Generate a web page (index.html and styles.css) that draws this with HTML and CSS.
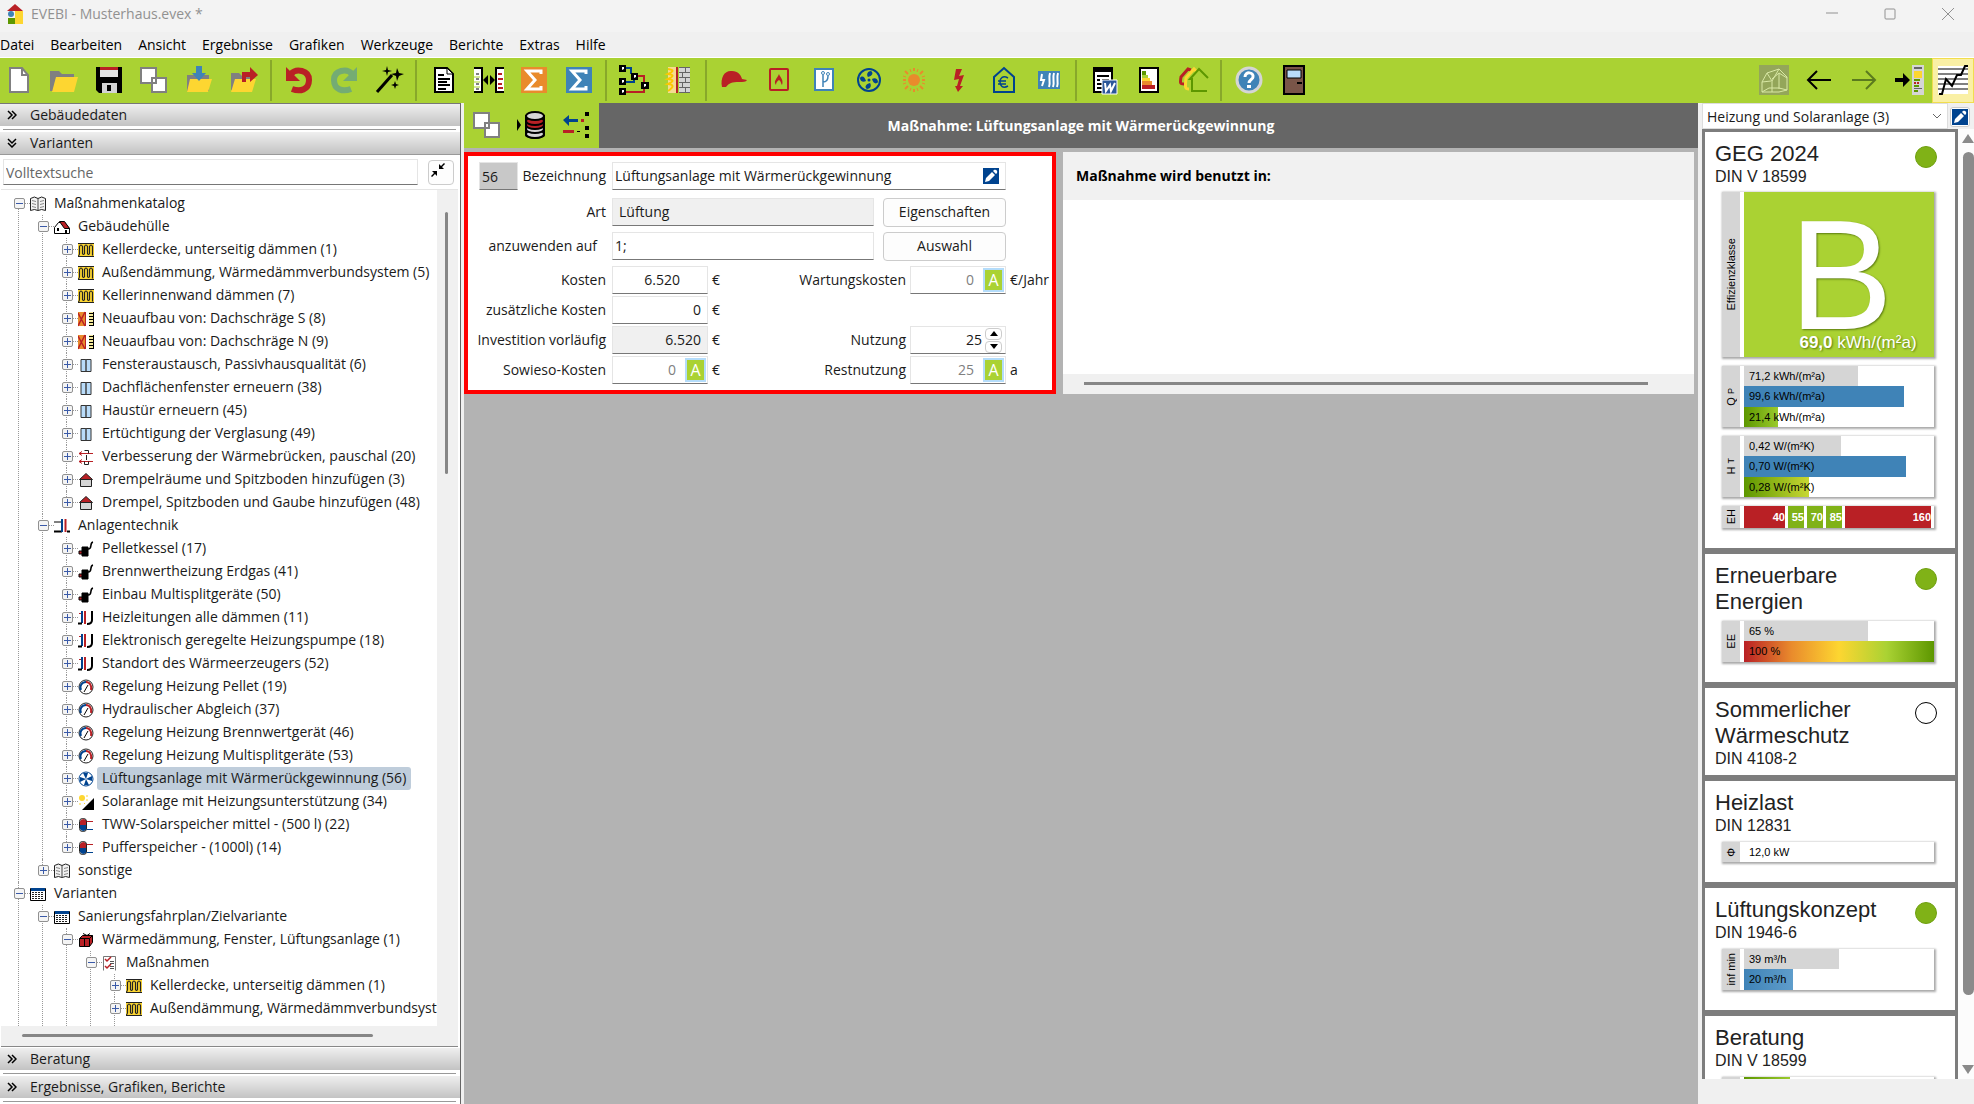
FILE: index.html
```html
<!DOCTYPE html>
<html lang="de">
<head>
<meta charset="utf-8">
<title>EVEBI - Musterhaus.evex *</title>
<link rel="stylesheet" href="styles.css">
</head>
<body>
<svg class="sprite" aria-hidden="true">
  <!-- toolbar icons, 30 x 30 -->
  <symbol id="new" viewBox="0 0 30 30"><path d="M6 3h12l6 7v17H6z" fill="#fff" stroke="#808080" stroke-width="2"/><path d="M18 3v7h6" fill="none" stroke="#808080" stroke-width="2"/></symbol>
  <symbol id="open" viewBox="0 0 30 30"><path d="M1 6h9l3 3h12v6H1z" fill="#808080"/><path d="M1 9h24v17H1z" fill="#808080"/><path d="M7 12h22l-4 15H3z" fill="#fdd631"/></symbol>
  <symbol id="save" viewBox="0 0 30 30"><path d="M2 2h26v26H5l-3-3z" fill="#000"/><path d="M6 3h18v9H6z" fill="#e4e4e4"/><path d="M6 2h18v3H6z" fill="#b92025"/><path d="M8 18h15v10H8z" fill="#d4d4d4"/><path d="M13 20h4v6h-4z" fill="#000"/></symbol>
  <symbol id="copy" viewBox="0 0 30 30"><path d="M2 3h15v15H2zM13 13h14v14H13z" fill="#fff" stroke="#808080" stroke-width="2"/></symbol>
  <symbol id="import" viewBox="0 0 30 30"><path d="M3 10h22v16H3z" fill="#808080"/><path d="M6 14h22l-4 13H3z" fill="#fdd631"/><path d="M12 1h6v7h4l-7 8-7-8h4z" fill="#3f83b7"/></symbol>
  <symbol id="export" viewBox="0 0 30 30"><path d="M2 8h8l3 3h10v14H2z" fill="#808080"/><path d="M6 14h21l-4 13H2z" fill="#fdd631"/><path d="M13 17V7h8V2l8 8-8 7v-5h-4v5z" fill="#b92025"/></symbol>
  <symbol id="undo" viewBox="0 0 30 30"><path d="M7 9c5-6 18-4 18 6 0 10-9 12-17 9" fill="none" stroke="#b92025" stroke-width="6"/><path d="M2 2v14h14z" fill="#b92025"/></symbol>
  <symbol id="redo" viewBox="0 0 30 30"><path d="M23 9C18 3 5 5 5 15c0 10 9 12 17 9" fill="none" stroke="#74ac73" stroke-width="6"/><path d="M28 2v14H14z" fill="#74ac73"/></symbol>
  <symbol id="wand" viewBox="0 0 30 30"><path d="M3 27L18 10" stroke="#000" stroke-width="3"/><path d="M13 1l1 4 4 1-4 1-1 4-1-4-4-1 4-1zM23 3l2 5 5 1-5 2-2 5-1-5-5-2 5-1zM21 16l1 3 3 1-3 1-1 3-1-3-3-1 3-1z" fill="#000"/></symbol>
  <symbol id="doc" viewBox="0 0 30 30"><path d="M6 3h12l6 6v18H6z" fill="#fff" stroke="#000" stroke-width="2"/><path d="M18 3v6h6z" fill="#fff" stroke="#000"/><path d="M9 10h6M9 14h12M9 17h9M9 20h12M9 24h8" stroke="#000" stroke-width="2"/></symbol>
  <symbol id="compare" viewBox="0 0 30 30"><path d="M0 2h8v26H0z" fill="#fff"/><path d="M22 2h8v26h-8z" fill="#fff"/><path d="M0 3h8v24H0M30 3h-8v24h8" fill="none" stroke="#000" stroke-width="2"/><path d="M2 9h3M2 14h3M2 19h3M2 24h3" stroke="#000"/><path d="M0 12h6M0 17h6M0 22h6" stroke="#aad233"/><path d="M24 9h4M24 14h5M24 19h4M24 23h5" stroke="#b92025" stroke-width="2"/><path d="M14 10v10l-5-5zM16 10v10l5-5z" fill="#000"/></symbol>
  <symbol id="sum" viewBox="0 0 30 30"><path d="M2 2h26v26H2z"/><path d="M22 9V6H8l8 9-8 9h14v-3" fill="none" stroke="#fff" stroke-width="3"/></symbol>
  <symbol id="nodes" viewBox="0 0 30 30"><path d="M5 3h7v6M5 17h10v-4" fill="none" stroke="#00438f" stroke-width="2"/><path d="M5 27h20v-6M18 11h7v7" fill="none" stroke="#b92025" stroke-width="2"/><path d="M0 0h7v7H0zM0 13h7v7H0zM0 23h7v7H0zM12 8h7v7h-7zM22 17h8v7h-8z"/><path d="M3 2h2v2l-2 1zM3 15h2v2l-2 1zM3 25h2v2l-2 1zM15 10h2v2l-2 1zM25 19h2v2l-2 1z" fill="#fff"/></symbol>
  <symbol id="wall" viewBox="0 0 30 30"><path d="M4 2h9v26H4z" fill="#f5dc90"/><path d="M4 4q9 1 0 5q9 1 0 5q9 1 0 5q9 1 0 7" fill="none" stroke="#fdc800" stroke-width="2"/><path d="M12 2h2v26h-2z" fill="#b92025"/><path d="M15 2h11v26H15z" fill="#666"/><path d="M15 3h6v4h-6zM22 3h4v4h-4zM15 8h3v4h-3zM19 8h7v4h-7zM15 13h6v4h-6zM22 13h4v4h-4zM15 18h3v4h-3zM19 18h7v4h-7zM15 23h6v4h-6zM22 23h4v4h-4z" fill="#d5d5d5"/></symbol>
  <symbol id="cap" viewBox="0 0 30 30"><path d="M3 22C1 12 6 5 13 6c6 0 9 4 10 8l5 1c-1 2-4 2-8 2-7 0-10 1-13 5z" fill="#b92025"/></symbol>
  <symbol id="flame" viewBox="0 0 30 30"><rect x="6" y="4" width="18" height="21" rx="1" fill="none" stroke="#b92025" stroke-width="2"/><path d="M12 20c-3-4 1-6 3-11 1 3 5 6 3 11-1-1-1-4-3-5-2 1-3 3-3 5z" fill="#b92025"/></symbol>
  <symbol id="branch" viewBox="0 0 30 30"><rect x="6" y="4" width="18" height="21" fill="#fff" stroke="#3f83b7" stroke-width="2"/><path d="M14 22V10M14 17c4 0 5-2 5-6" fill="none" stroke="#3f83b7" stroke-width="1.500"/><circle cx="14" cy="8" r="1.500" fill="#fff" stroke="#3f83b7"/><circle cx="19" cy="9" r="1.500" fill="#fff" stroke="#3f83b7"/></symbol>
  <symbol id="fan" viewBox="0 0 30 30"><circle cx="15" cy="15" r="11" fill="none" stroke="#00438f" stroke-width="2"/><circle cx="15" cy="15" r="1.500" fill="#00438f"/><path d="M14 12c-2-3 0-6 3-6 3 2 1 5-3 6zM18 14c3-2 6 0 6 3-2 3-5 1-6-3zM16 18c2 3 0 6-3 6-3-2-1-5 3-6zM12 16c-3 2-6 0-6-3 2-3 5-1 6 3z" fill="#00438f"/></symbol>
  <symbol id="sun" viewBox="0 0 30 30"><circle cx="15" cy="15" r="6" fill="#e98b2c"/><path d="M15 3v3M15 24v3M4 15h3M23 15h3M6 6l3 3M21 21l3 3M6 24l3-3M21 9l3-3" stroke="#e98b2c" stroke-width="2"/><path d="M11 4l1 3M18 23l1 3M11 26l1-3M19 4l-1 3M4 11l3 1M26 11l-3 1M4 19l3-1M26 19l-3-1" stroke="#e98b2c"/></symbol>
  <symbol id="bolt" viewBox="0 0 30 30"><path d="M12 4h6l-3 7 5-1-4 11h3l-5 6-3-6h2l2-7-5 1z" fill="#b92025"/></symbol>
  <symbol id="euro" viewBox="0 0 30 30"><path d="M5 27V12l10-9 10 9v15z" fill="none" stroke="#00438f" stroke-width="2"/><path d="M19 13c-5-3-8 0-8 4s3 7 8 4M9 16h8M9 19h8" fill="none" stroke="#00438f" stroke-width="1.500"/></symbol>
  <symbol id="heat" viewBox="0 0 30 30"><path d="M4 6h22v18H4z" fill="#3f83b7"/><path d="M15 22c2-5-1-8 1-14M19 22c2-5-1-8 1-14M23 22c2-5-1-8 1-14" fill="none" stroke="#fff" stroke-width="2"/><path d="M8 9l-1 6h3l-2 6" fill="none" stroke="#fff" stroke-width="2"/></symbol>
  <symbol id="word" viewBox="0 0 30 30"><path d="M5 3h18v24H5z" fill="#fff" stroke="#000" stroke-width="2"/><path d="M5 3h18v4H5zM8 10h12v2H8zM8 14h3v2H8zM13 14h7v2h-7zM8 18h6v2H8zM8 22h5v2H8z"/><path d="M13 15h15v14H13z" fill="#2b579a" stroke="#fff"/><path d="M16 18l1 8 4-6 1 6 4-8" fill="none" stroke="#fff" stroke-width="2"/></symbol>
  <symbol id="cert" viewBox="0 0 30 30"><path d="M6 3h18v24H6z" fill="#fff" stroke="#000" stroke-width="2"/><path d="M8 6h4v4H8z" fill="#5d9700"/><path d="M8 10h6v3H8z" fill="#aad233"/><path d="M8 13h8v3H8z" fill="#fdd631"/><path d="M8 16h10v4H8z" fill="#e98b2c"/><path d="M8 20h13v4H8z" fill="#b92025"/></symbol>
  <symbol id="houses" viewBox="0 0 30 30"><g fill="none" stroke-width="2"><path d="M5 19c-4 0-4-1-3-7l7-8 3 1" stroke="#b92025" stroke-width="3"/><path d="M10 24c-4 0-4-1-3-11l8-9 2 2" stroke="#fdd631" stroke-width="3"/><path d="M28 26H13V14h-2l9-10 9 9" stroke="#5d9700"/></g></symbol>
  <symbol id="help" viewBox="0 0 30 30"><circle cx="15" cy="15" r="12" fill="#3f83b7" stroke="#d5d5d5" stroke-width="3"/><path d="M11 12c0-6 9-5 8 0 0 2-4 3-4 6" fill="none" stroke="#fff" stroke-width="3"/><path d="M13 20h4v3h-4z" fill="#fff"/></symbol>
  <symbol id="door" viewBox="0 0 30 30"><path d="M5 1h20v28H5z" fill="#795548" stroke="#000" stroke-width="2"/><path d="M8 5h14v8H8z" fill="#b9dcfa" stroke="#000"/><path d="M18 17h5v2h-5z"/></symbol>
  <symbol id="house3d" viewBox="0 0 30 30"><path d="M0 0h30v30H0z" fill="#94a65a"/><path d="M3 27V17l5-9 12-4 8 8v13l-8 2zM3 17l9-1M8 8l5 8v11M13 16l7-12M13 14l7-6 8 5M20 8v16M3 27l7-4h10l8 2" fill="none" stroke="#d9e8a5"/></symbol>
  <symbol id="back" viewBox="0 0 30 30"><path d="M27 15H5M13 6l-9 9 9 9" fill="none" stroke="#000" stroke-width="2"/></symbol>
  <symbol id="forward" viewBox="0 0 30 30"><path d="M3 15h22M17 6l9 9-9 9" fill="none" stroke="#5a7a1e" stroke-width="2"/></symbol>
  <symbol id="dock" viewBox="0 0 30 30"><path d="M1 13h8V8l7 7-7 7v-5H1z"/><path d="M18 0h12v30H18z" fill="#d5d5d5"/><path d="M20 2h8v2h-8z" fill="#666"/><path d="M20 6h8v7h-8z" fill="#fdd631"/><path d="M20 14h6v2h-6zM20 20h5v2h-5zM20 25h4v2h-4z" fill="#5d9700"/><path d="M20 17h2v2h-2zM23 17h2v2h-2z" fill="#b92025"/><path d="M20 23h8v1h-8z" fill="#666"/></symbol>
  <symbol id="chart" viewBox="0 0 30 30"><path d="M0 1h30v28H0z" fill="#fff"/><path d="M0 4h30M0 9h30M0 14h30M0 19h30M0 24h30" stroke="#808080" stroke-width="2"/><path d="M1 29h3l4-15 6 7 5-11h4l4-9h3" fill="none" stroke="#000" stroke-width="2"/></symbol>
  <symbol id="stack" viewBox="0 0 30 30"><path d="M0 9v12l4-6z"/><path d="M8 5v20c0 5 20 5 20 0V5z"/><g stroke="#000" stroke-width="2"><ellipse cx="18" cy="24" rx="9" ry="4" fill="#d5d5d5"/><ellipse cx="18" cy="19" rx="9" ry="4" fill="#d5d5d5"/><ellipse cx="18" cy="15" rx="9" ry="4" fill="#b92025"/><ellipse cx="18" cy="11" rx="9" ry="4" fill="#b92025"/><ellipse cx="18" cy="6" rx="9" ry="4" fill="#d5d5d5"/></g></symbol>
  <symbol id="swap" viewBox="0 0 30 30"><path d="M1 10l6-5v4h9v3H7v4z" fill="#00438f"/><path d="M19 9h3v3h-3zM1 20h11v3H1z" fill="#b92025"/><path d="M23 2h4v4h-4zM23 16h4v4h-4zM23 24h4v4h-4zM15 21h3v1h-3z"/></symbol>
  <symbol id="edit" viewBox="0 0 16 16"><path d="M0 0h16v16H0z" fill="#00438f"/><path d="M2 14l1-4 6-6 3 3-6 6zM10 3l1-1c2-1 4 1 3 3l-1 1z" fill="#fff"/></symbol>
  <symbol id="collapse" viewBox="0 0 16 16"><path d="M9 7V2l2 2 3-3 1 1-3 3 2 2zM7 9v5l-2-2-3 3-1-1 3-3-2-2z"/></symbol>
  <symbol id="right" viewBox="0 0 10 10"><path d="M1 1l4 4-4 4M5 1l4 4-4 4" fill="none" stroke="#000" stroke-width="1.500"/></symbol>
  <symbol id="down" viewBox="0 0 10 10"><path d="M1 1l4 4 4-4M1 5l4 4 4-4" fill="none" stroke="#000" stroke-width="1.500"/></symbol>
  <symbol id="logo" viewBox="0 0 16 20"><path d="M8 0l8 7H0z" fill="#b92025"/><path d="M8 7h8v13H8z" fill="#fdd631"/><path d="M1 14h7v6H1z" fill="#5d9700"/><circle cx="4" cy="10" r="3" fill="#3f83b7"/></symbol>
  <!-- tree icons, 16 x 16 -->
  <symbol id="t-book" viewBox="0 0 16 16"><path d="M.5 2.500q4-3 7.500 0q3.500-3 7.500 0v12q-4-2-7.500 0q-3.500-2-7.500 0z" fill="#f2f2f2" stroke="#222"/><path d="M8 2v13" stroke="#444"/><path d="M2 4.500l4 1M2 7.500l4 1M2 10.500l4 1M14 4.500l-4 1M14 7.500l-4 1M14 10.500l-4 1" stroke="#888"/></symbol>
  <symbol id="t-house" viewBox="0 0 16 16"><path d="M.5 8.500l4-5h6l5 6v5H.5z" fill="#fff" stroke="#000"/><path d="M5.500 2.500h5l5 7h-5z" fill="#b92025" stroke="#000"/><path d="M3 9h2v3H3zM11 11h2v4h-2z"/></symbol>
  <symbol id="t-ins" viewBox="0 0 16 16"><path d="M0 2h16v12H0z" fill="#fdd631"/><path d="M0 14.500h16M0 1.500h16" stroke="#222"/><path d="M0 13.500q1.500 0 1.500-2V4.500q1.500-3 3 0v7q1 2 2 0V4.500q1.500-3 3 0v7q1 2 2 0V4.500q1.500-3 3 0v9" fill="none" stroke="#222" stroke-width="1.200"/></symbol>
  <symbol id="t-new" viewBox="0 0 16 16"><path d="M0 1h8v14H0z" fill="#e98b2c"/><path d="M0 2l7 13M7 1L0 15" stroke="#b92025" stroke-width="1.500"/><path d="M7 1h1v14H7z" fill="#b92025"/><path d="M11 1h5v14h-5z" fill="#f5ea9c"/><path d="M11 2.500h5M11 5.500h5M11 8.500h5M11 11.500h5M11 14.500h5M15.500 1v14" stroke="#000"/></symbol>
  <symbol id="t-win" viewBox="0 0 16 16"><path d="M3 2.500h10v12H3z" fill="#b9dcfa" stroke="#333"/><path d="M8 2v12" stroke="#444" stroke-width="1.500"/></symbol>
  <symbol id="t-bridge" viewBox="0 0 16 16"><path d="M1 4.500h14M1 12.500h14M4 2.500l-3 2 3 2M4 10.500l-3 2 3 2" fill="none" stroke="#b92025"/><path d="M6.500 1.500h4v3M8.500 6v5M6.500 12.500v3h4v-3" fill="none" stroke="#222"/></symbol>
  <symbol id="t-roof" viewBox="0 0 16 16"><path d="M2.500 7.500h11v7h-11z" fill="#d5d5d5" stroke="#222"/><path d="M1.500 7.500l6.500-6 6.500 6z" fill="#b92025" stroke="#222"/></symbol>
  <symbol id="t-pipes" viewBox="0 0 16 16"><path d="M0 4h8" stroke="#000"/><path d="M0 13.500h8M13 13.500h3" stroke="#000" stroke-width="2"/><path d="M8 1v13" stroke="#00438f" stroke-width="2"/><path d="M11.500 1v13" stroke="#b92025" stroke-width="2"/></symbol>
  <symbol id="t-boiler" viewBox="0 0 16 16"><path d="M4 6h6v9H4z" stroke="#000"/><path d="M10 8c5 0 1-6 5-7" fill="none" stroke="#000" stroke-width="1.500"/><path d="M1 10h3v3H1z" fill="#b92025" stroke="#000"/></symbol>
  <symbol id="t-pump" viewBox="0 0 16 16"><path d="M1 3.500h4" stroke="#b92025"/><path d="M4 1v12" stroke="#00438f" stroke-width="2"/><path d="M7 1v13" stroke="#b92025" stroke-width="2"/><path d="M0 13.500h4M14 1v9q0 4-5 4" fill="none" stroke="#000" stroke-width="2"/></symbol>
  <symbol id="t-gauge" viewBox="0 0 16 16"><circle cx="8" cy="8" r="7" fill="#fff" stroke="#222"/><path d="M3 11c-2-4 1-8 5-8" fill="none" stroke="#00438f" stroke-width="2"/><path d="M8 3c4 0 6 4 5 8" fill="none" stroke="#b92025" stroke-width="2"/><path d="M6 13l4-7" stroke="#000"/></symbol>
  <symbol id="t-fan" viewBox="0 0 16 16"><circle cx="8" cy="8" r="7" fill="#fff" stroke="#00438f"/><path d="M8 8L5 2h5zM8 8l6-3v5zM8 8l3 6H6zM8 8l-6 3V6z" fill="#00438f"/></symbol>
  <symbol id="t-solar" viewBox="0 0 16 16"><circle cx="4" cy="4" r="3" fill="#fdd631"/><path d="M8 2h2M8 6h2M2 9v2M6 9l1 1" stroke="#fdd631"/><path d="M16 4v12H4z"/></symbol>
  <symbol id="t-tank" viewBox="0 0 16 16"><path d="M2 8V4q3-4 7 0v4z" fill="#b92025"/><path d="M2 8v4q3 4 7 0V8z" fill="#00438f"/><rect x="1.500" y="1.500" width="7" height="13" rx="3" fill="none" stroke="#222"/><path d="M9 4.500h6" stroke="#b92025"/><path d="M9 12.500h6" stroke="#00438f"/></symbol>
  <symbol id="t-table" viewBox="0 0 16 16"><path d="M.5 2.500h15v12H.5z" fill="#fff" stroke="#000"/><path d="M1 2h14v3H1z" fill="#00438f"/><path d="M2 6.500h12M2 8.500h12M2 10.500h12M2 12.500h12" stroke="#222" stroke-dasharray="2 1"/></symbol>
  <symbol id="t-pack" viewBox="0 0 16 16"><path d="M1.500 6.500l3-3h10v7l-3 4h-10z" fill="#b92025" stroke="#000"/><path d="M1.500 6.500h10l3-3M11.500 6.500v8M6.500 6.500v8M5 1.500l4 2 3-2" fill="none" stroke="#000"/></symbol>
  <symbol id="t-list" viewBox="0 0 16 16"><path d="M1.500 15.500v-14h12v14" fill="none" stroke="#777"/><path d="M3 4l2 2 4-4M3 11l2 2 4-4" fill="none" stroke="#b92025" stroke-width="1.500"/><path d="M8 6.500h4M8 8.500h4M8 11.500h4M8 13.500h4" stroke="#555"/></symbol>
</svg>

<div class="app">
  <header class="titlebar">
    <svg class="logo"><use href="#logo"/></svg>
    <span>EVEBI - Musterhaus.evex *</span>
    <div class="win">
      <button aria-label="Minimieren"><svg viewBox="0 0 12 12"><path d="M0 5h12"/></svg></button>
      <button aria-label="Maximieren"><svg viewBox="0 0 12 12"><rect x="1" y="1" width="10" height="10" rx="1"/></svg></button>
      <button aria-label="Schließen"><svg viewBox="0 0 12 12"><path d="M0 0l12 12M12 0L0 12"/></svg></button>
    </div>
  </header>
  <nav class="menu">
    <button>Datei</button><button>Bearbeiten</button><button>Ansicht</button><button>Ergebnisse</button><button>Grafiken</button><button>Werkzeuge</button><button>Berichte</button><button>Extras</button><button>Hilfe</button>
  </nav>
  <div class="toolbar">
    <button class="tool first" aria-label="Neu"><svg><use href="#new"/></svg></button>
    <button class="tool" aria-label="Öffnen"><svg><use href="#open"/></svg></button>
    <button class="tool" aria-label="Speichern"><svg><use href="#save"/></svg></button>
    <button class="tool" aria-label="Kopieren"><svg><use href="#copy"/></svg></button>
    <button class="tool" aria-label="Importieren"><svg><use href="#import"/></svg></button>
    <button class="tool" aria-label="Exportieren"><svg><use href="#export"/></svg></button>
    <span class="sep"></span>
    <button class="tool" aria-label="Rückgängig"><svg><use href="#undo"/></svg></button>
    <button class="tool" aria-label="Wiederholen"><svg><use href="#redo"/></svg></button>
    <button class="tool" aria-label="Assistent"><svg><use href="#wand"/></svg></button>
    <span class="sep"></span>
    <button class="tool" aria-label="Dokument"><svg><use href="#doc"/></svg></button>
    <button class="tool" aria-label="Vergleich"><svg><use href="#compare"/></svg></button>
    <button class="tool orange" aria-label="Summe"><svg><use href="#sum"/></svg></button>
    <button class="tool blue" aria-label="Summe Variante"><svg><use href="#sum"/></svg></button>
    <span class="sep"></span>
    <button class="tool" aria-label="Struktur"><svg><use href="#nodes"/></svg></button>
    <button class="tool" aria-label="Bauteil"><svg><use href="#wall"/></svg></button>
    <span class="sep"></span>
    <button class="tool" aria-label="Berater"><svg><use href="#cap"/></svg></button>
    <button class="tool" aria-label="Heizung"><svg><use href="#flame"/></svg></button>
    <button class="tool" aria-label="Trinkwasser"><svg><use href="#branch"/></svg></button>
    <button class="tool" aria-label="Lüftung"><svg><use href="#fan"/></svg></button>
    <button class="tool" aria-label="Solar"><svg><use href="#sun"/></svg></button>
    <button class="tool" aria-label="Strom"><svg><use href="#bolt"/></svg></button>
    <button class="tool" aria-label="Kosten"><svg><use href="#euro"/></svg></button>
    <button class="tool" aria-label="Elektroheizung"><svg><use href="#heat"/></svg></button>
    <span class="sep"></span>
    <button class="tool" aria-label="Word-Bericht"><svg><use href="#word"/></svg></button>
    <button class="tool" aria-label="Energieausweis"><svg><use href="#cert"/></svg></button>
    <button class="tool" aria-label="Sanierungsfahrplan"><svg><use href="#houses"/></svg></button>
    <span class="sep"></span>
    <button class="tool" aria-label="Hilfe"><svg><use href="#help"/></svg></button>
    <button class="tool" aria-label="Beenden"><svg><use href="#door"/></svg></button>
    <span class="spacer"></span>
    <button class="tool" aria-label="3D-Ansicht"><svg><use href="#house3d"/></svg></button>
    <button class="tool" aria-label="Zurück"><svg><use href="#back"/></svg></button>
    <button class="tool" aria-label="Vor"><svg><use href="#forward"/></svg></button>
    <button class="tool" aria-label="Leiste andocken"><svg><use href="#dock"/></svg></button>
    <button class="tool active" aria-label="Diagramm"><svg><use href="#chart"/></svg></button>
  </div>

  <div class="body">
    <aside class="left">
      <button class="section"><svg><use href="#right"/></svg>Gebäudedaten</button>
      <hr>
      <button class="section"><svg><use href="#down"/></svg>Varianten</button>
      <div class="search">
        <input type="text" placeholder="Volltextsuche" aria-label="Volltextsuche">
        <button aria-label="Alle einklappen"><svg><use href="#collapse"/></svg></button>
      </div>
      <div class="treebox">
        <div class="treeview">
          <ul class="tree">
            <li><div class="row"><button class="tw" aria-label="Zuklappen"></button><svg><use href="#t-book"/></svg><span>Maßnahmenkatalog</span></div>
              <ul>
                <li><div class="row"><button class="tw" aria-label="Zuklappen"></button><svg><use href="#t-house"/></svg><span>Gebäudehülle</span></div>
                  <ul>
                    <li><div class="row"><button class="tw plus" aria-label="Aufklappen"></button><svg><use href="#t-ins"/></svg><span>Kellerdecke, unterseitig dämmen (1)</span></div></li>
                    <li><div class="row"><button class="tw plus" aria-label="Aufklappen"></button><svg><use href="#t-ins"/></svg><span>Außendämmung, Wärmedämmverbundsystem (5)</span></div></li>
                    <li><div class="row"><button class="tw plus" aria-label="Aufklappen"></button><svg><use href="#t-ins"/></svg><span>Kellerinnenwand dämmen (7)</span></div></li>
                    <li><div class="row"><button class="tw plus" aria-label="Aufklappen"></button><svg><use href="#t-new"/></svg><span>Neuaufbau von: Dachschräge S (8)</span></div></li>
                    <li><div class="row"><button class="tw plus" aria-label="Aufklappen"></button><svg><use href="#t-new"/></svg><span>Neuaufbau von: Dachschräge N (9)</span></div></li>
                    <li><div class="row"><button class="tw plus" aria-label="Aufklappen"></button><svg><use href="#t-win"/></svg><span>Fensteraustausch, Passivhausqualität (6)</span></div></li>
                    <li><div class="row"><button class="tw plus" aria-label="Aufklappen"></button><svg><use href="#t-win"/></svg><span>Dachflächenfenster erneuern (38)</span></div></li>
                    <li><div class="row"><button class="tw plus" aria-label="Aufklappen"></button><svg><use href="#t-win"/></svg><span>Haustür erneuern (45)</span></div></li>
                    <li><div class="row"><button class="tw plus" aria-label="Aufklappen"></button><svg><use href="#t-win"/></svg><span>Ertüchtigung der Verglasung (49)</span></div></li>
                    <li><div class="row"><button class="tw plus" aria-label="Aufklappen"></button><svg><use href="#t-bridge"/></svg><span>Verbesserung der Wärmebrücken, pauschal (20)</span></div></li>
                    <li><div class="row"><button class="tw plus" aria-label="Aufklappen"></button><svg><use href="#t-roof"/></svg><span>Drempelräume und Spitzboden hinzufügen (3)</span></div></li>
                    <li><div class="row"><button class="tw plus" aria-label="Aufklappen"></button><svg><use href="#t-roof"/></svg><span>Drempel, Spitzboden und Gaube hinzufügen (48)</span></div></li>
                  </ul></li>
                <li><div class="row"><button class="tw" aria-label="Zuklappen"></button><svg><use href="#t-pipes"/></svg><span>Anlagentechnik</span></div>
                  <ul>
                    <li><div class="row"><button class="tw plus" aria-label="Aufklappen"></button><svg><use href="#t-boiler"/></svg><span>Pelletkessel (17)</span></div></li>
                    <li><div class="row"><button class="tw plus" aria-label="Aufklappen"></button><svg><use href="#t-boiler"/></svg><span>Brennwertheizung Erdgas (41)</span></div></li>
                    <li><div class="row"><button class="tw plus" aria-label="Aufklappen"></button><svg><use href="#t-boiler"/></svg><span>Einbau Multisplitgeräte (50)</span></div></li>
                    <li><div class="row"><button class="tw plus" aria-label="Aufklappen"></button><svg><use href="#t-pump"/></svg><span>Heizleitungen alle dämmen (11)</span></div></li>
                    <li><div class="row"><button class="tw plus" aria-label="Aufklappen"></button><svg><use href="#t-pump"/></svg><span>Elektronisch geregelte Heizungspumpe (18)</span></div></li>
                    <li><div class="row"><button class="tw plus" aria-label="Aufklappen"></button><svg><use href="#t-pump"/></svg><span>Standort des Wärmeerzeugers (52)</span></div></li>
                    <li><div class="row"><button class="tw plus" aria-label="Aufklappen"></button><svg><use href="#t-gauge"/></svg><span>Regelung Heizung Pellet (19)</span></div></li>
                    <li><div class="row"><button class="tw plus" aria-label="Aufklappen"></button><svg><use href="#t-gauge"/></svg><span>Hydraulischer Abgleich (37)</span></div></li>
                    <li><div class="row"><button class="tw plus" aria-label="Aufklappen"></button><svg><use href="#t-gauge"/></svg><span>Regelung Heizung Brennwertgerät (46)</span></div></li>
                    <li><div class="row"><button class="tw plus" aria-label="Aufklappen"></button><svg><use href="#t-gauge"/></svg><span>Regelung Heizung Multisplitgeräte (53)</span></div></li>
                    <li><div class="row"><button class="tw plus" aria-label="Aufklappen"></button><svg><use href="#t-fan"/></svg><span class="selected">Lüftungsanlage mit Wärmerückgewinnung (56)</span></div></li>
                    <li><div class="row"><button class="tw plus" aria-label="Aufklappen"></button><svg><use href="#t-solar"/></svg><span>Solaranlage mit Heizungsunterstützung (34)</span></div></li>
                    <li><div class="row"><button class="tw plus" aria-label="Aufklappen"></button><svg><use href="#t-tank"/></svg><span>TWW-Solarspeicher mittel - (500 l) (22)</span></div></li>
                    <li><div class="row"><button class="tw plus" aria-label="Aufklappen"></button><svg><use href="#t-tank"/></svg><span>Pufferspeicher - (1000l) (14)</span></div></li>
                  </ul></li>
                <li><div class="row"><button class="tw plus" aria-label="Aufklappen"></button><svg><use href="#t-book"/></svg><span>sonstige</span></div></li>
              </ul></li>
            <li class="more"><div class="row"><button class="tw" aria-label="Zuklappen"></button><svg><use href="#t-table"/></svg><span>Varianten</span></div>
              <ul>
                <li class="more"><div class="row"><button class="tw" aria-label="Zuklappen"></button><svg><use href="#t-table"/></svg><span>Sanierungsfahrplan/Zielvariante</span></div>
                  <ul>
                    <li class="more"><div class="row"><button class="tw" aria-label="Zuklappen"></button><svg><use href="#t-pack"/></svg><span>Wärmedämmung, Fenster, Lüftungsanlage (1)</span></div>
                      <ul>
                        <li class="more"><div class="row"><button class="tw" aria-label="Zuklappen"></button><svg><use href="#t-list"/></svg><span>Maßnahmen</span></div>
                          <ul>
                            <li><div class="row"><button class="tw plus" aria-label="Aufklappen"></button><svg><use href="#t-ins"/></svg><span>Kellerdecke, unterseitig dämmen (1)</span></div></li>
                            <li class="more"><div class="row"><button class="tw plus" aria-label="Aufklappen"></button><svg><use href="#t-ins"/></svg><span>Außendämmung, Wärmedämmverbundsystem (5)</span></div></li>
                          </ul></li>
                      </ul></li>
                  </ul></li>
              </ul></li>
          </ul>
        </div>
        <div class="vbar"><i></i></div>
        <div class="hbar"><i></i></div>
      </div>
      <button class="section"><svg><use href="#right"/></svg>Beratung</button>
      <hr>
      <button class="section"><svg><use href="#right"/></svg>Ergebnisse, Grafiken, Berichte</button>
      <hr>
    </aside>

    <main class="main">
      <div class="mainhead">
        <div class="minitools">
          <button class="tool" aria-label="Kopieren"><svg><use href="#copy"/></svg></button>
          <button class="tool" aria-label="In Datenbank"><svg><use href="#stack"/></svg></button>
          <button class="tool" aria-label="Zuordnen"><svg><use href="#swap"/></svg></button>
        </div>
        <h1>Maßnahme: Lüftungsanlage mit Wärmerückgewinnung</h1>
      </div>
      <div class="panels">
        <form class="form">
          <div class="frow tall">
            <input class="nr" type="text" value="56" aria-label="Nummer" readonly>
            <label class="lab short" for="bez">Bezeichnung</label>
            <div class="field wide"><input id="bez" type="text" value="Lüftungsanlage mit Wärmerückgewinnung"><button type="button" class="pen" aria-label="Bearbeiten"><svg><use href="#edit"/></svg></button></div>
          </div>
          <div class="frow">
            <label class="lab" for="art">Art</label>
            <div class="field mid gray"><input id="art" type="text" value="Lüftung" readonly></div>
            <button type="button" class="btn">Eigenschaften</button>
          </div>
          <div class="frow">
            <label class="lab inset" for="auf">anzuwenden auf</label>
            <div class="field mid"><input id="auf" type="text" value="1;"></div>
            <button type="button" class="btn">Auswahl</button>
          </div>
          <div class="frow dense">
            <label class="lab" for="kosten">Kosten</label>
            <div class="field num room"><input id="kosten" type="text" value="6.520"></div><span class="unit">€</span>
            <label class="lab2" for="wart">Wartungskosten</label>
            <div class="field num auto"><input id="wart" type="text" value="0"><button type="button" class="a">A</button></div><span class="unit">€/Jahr</span>
          </div>
          <div class="frow dense">
            <label class="lab" for="zus">zusätzliche Kosten</label>
            <div class="field num"><input id="zus" type="text" value="0"></div><span class="unit">€</span>
          </div>
          <div class="frow dense">
            <label class="lab" for="inv">Investition vorläufig</label>
            <div class="field num gray"><input id="inv" type="text" value="6.520" readonly></div><span class="unit">€</span>
            <label class="lab2" for="nutz">Nutzung</label>
            <div class="field num spin"><input id="nutz" type="text" value="25"><span class="updown"><button type="button" aria-label="Mehr"><svg viewBox="0 0 8 5"><path d="M0 5h8L4 0z"/></svg></button><button type="button" aria-label="Weniger"><svg viewBox="0 0 8 5"><path d="M0 0h8L4 5z"/></svg></button></span></div><span class="unit"></span>
          </div>
          <div class="frow dense">
            <label class="lab" for="sow">Sowieso-Kosten</label>
            <div class="field num auto"><input id="sow" type="text" value="0"><button type="button" class="a">A</button></div><span class="unit">€</span>
            <label class="lab2" for="rest">Restnutzung</label>
            <div class="field num auto"><input id="rest" type="text" value="25"><button type="button" class="a">A</button></div><span class="unit">a</span>
          </div>
        </form>
        <section class="used">
          <h2>Maßnahme wird benutzt in:</h2>
          <div class="usedbar"><i></i></div>
        </section>
      </div>
    </main>

    <aside class="right">
      <div class="pick">
        <select aria-label="Variante"><option>Heizung und Solaranlage (3)</option></select>
        <button aria-label="Variante bearbeiten"><svg><use href="#edit"/></svg></button>
      </div>
      <div class="scroll">
        <div class="cards">
          <section class="card">
            <i class="dot"></i>
            <h3>GEG 2024</h3><p>DIN V 18599</p>
            <div class="meter class"><b><span>Effizienzklasse</span></b><div class="big"><span class="grade">B</span><span class="val"><strong>69,0</strong> kWh/(m²a)</span></div></div>
            <div class="meter"><b><span>Q <small>P</small></span></b><div class="bars">
              <div class="bar"><i class="g" style="width:60%"></i><span>71,2 kWh/(m²a)</span></div>
              <div class="bar"><i class="bl" style="width:84%"></i><span>99,6 kWh/(m²a)</span></div>
              <div class="bar"><i class="gr" style="width:18%"></i><span>21,4 kWh/(m²a)</span></div></div></div>
            <div class="meter"><b><span>H <small>T</small></span></b><div class="bars">
              <div class="bar"><i class="g" style="width:51%"></i><span>0,42 W/(m²K)</span></div>
              <div class="bar"><i class="bl" style="width:85%"></i><span>0,70 W/(m²K)</span></div>
              <div class="bar"><i class="gy" style="width:34%"></i><span>0,28 W/(m²K)</span></div></div></div>
            <div class="meter"><b><span>EH</span></b><div class="eh"><span class="red" style="width:41px">40</span><span>55</span><span>70</span><span>85</span><span class="red rest">160</span></div></div>
          </section>
          <section class="card">
            <i class="dot"></i>
            <h3>Erneuerbare<br>Energien</h3>
            <div class="meter"><b><span>EE</span></b><div class="bars">
              <div class="bar"><i class="g" style="width:65%"></i><span>65 %</span></div>
              <div class="bar"><i class="rain" style="width:100%"></i><span>100 %</span></div></div></div>
          </section>
          <section class="card">
            <i class="dot empty"></i>
            <h3>Sommerlicher<br>Wärmeschutz</h3><p>DIN 4108-2</p>
          </section>
          <section class="card">
            <h3>Heizlast</h3><p>DIN 12831</p>
            <div class="meter"><b><span>Φ</span></b><div class="bars"><div class="bar"><span>12,0 kW</span></div></div></div>
          </section>
          <section class="card">
            <i class="dot"></i>
            <h3>Lüftungskonzept</h3><p>DIN 1946-6</p>
            <div class="meter"><b><span>inf min</span></b><div class="bars">
              <div class="bar"><i class="g" style="width:50%"></i><span>39 m³/h</span></div>
              <div class="bar"><i class="lb" style="width:26%"></i><span>20 m³/h</span></div></div></div>
          </section>
          <section class="card">
            <h3>Beratung</h3><p>DIN V 18599</p>
            <div class="meter"><b></b><div class="bars">
              <div class="bar"><i class="gr" style="width:24%"></i></div>
              <div class="bar"></div></div></div>
          </section>
        </div>
        <div class="cbar"><svg viewBox="0 0 12 10"><path d="M6 0l6 9H0z"/></svg><i></i><svg viewBox="0 0 12 10"><path d="M0 1h12l-6 9z"/></svg></div>
      </div>
    </aside>
  </div>
</div>
</body>
</html>
```
FILE: styles.css
```css
* { box-sizing: border-box; }
body { margin: 0; font: 14px/20px "Open Sans", "Noto Sans", sans-serif; color: #1a1a1a; background: #f0f0f0; }
button, input, select { font: inherit; color: inherit; margin: 0; padding: 0; border: 0; background: none; border-radius: 0; }
button { display: flex; align-items: center; justify-content: center; }
input { outline: 0; min-width: 0; }
ul { list-style: none; margin: 0; padding: 0; }
h1, h2, h3, p { margin: 0; }
i { display: block; }
.sprite { display: none; }

.app { display: flex; flex-direction: column; height: 100vh; overflow: hidden; }

.titlebar { display: flex; align-items: center; height: 32px; padding: 0 20px 4px 7px; gap: 8px; background: #f3f3f3; color: #919191; }
.logo { width: 16px; height: 20px; }
.win { display: flex; gap: 46px; margin-left: auto; }
.win svg { width: 12px; height: 12px; fill: none; stroke: #919191; }

.menu { display: flex; gap: 16px; height: 26px; padding-top: 1px; border-bottom: 1px solid #fff; color: #000; }

.toolbar { display: flex; align-items: center; height: 45px; background: #aad233; }
.tool { width: 45px; height: 45px; flex: none; padding-bottom: 2px; }
.tool svg { width: 30px; height: 30px; }
.tool.first { margin-left: -4px; }
.tool.orange { fill: #e98b2c; }
.tool.blue { fill: #3f83b7; }
.tool.active { width: 42px; margin-left: 1px; background: #faf0a5; border: 1px solid #f1dd4e; }
.sep { width: 2px; height: 41px; margin: 0 4px; background: #88a82a; }
.spacer { flex: 1; }

.body { display: flex; flex: 1; min-height: 0; }

/* left navigation */
.left { display: flex; flex-direction: column; width: 461px; flex: none; background: #fff; border-top: 1px solid #777; border-right: 1px solid #666; }
.section { justify-content: flex-start; height: 22px; flex: none; gap: 13px; padding-left: 7px; background: linear-gradient(#efefef, #c3c3c3); }
.section svg { width: 10px; height: 10px; }
.left hr { width: calc(100% - 7px); height: 1px; flex: none; margin: 3px 4px 2px 3px; border: 0; background: #999; }
.search { display: flex; align-items: center; gap: 10px; padding: 4px 6px 4px 3px; border-top: 1px solid #999; }
.search input { flex: 1; height: 26px; padding: 0 2px; border: 1px solid #e5e5e5; border-bottom-color: #777; }
.search input::placeholder { color: #666; opacity: 1; }
.search button { width: 26px; height: 25px; border: 1px solid #ccc; border-radius: 4px; background: #fdfdfd; }
.search button svg { width: 16px; height: 16px; margin: -4px 0 0 -6px; }
.treebox { display: grid; grid-template-columns: 1fr 21px; grid-template-rows: 1fr 20px; flex: 1; min-height: 0; margin: 0 2px 1px 1px; border-top: 1px solid #e5e5e5; border-bottom: 1px solid #888; background: #f0f0f0; }
.treeview { overflow: hidden; padding-top: 2px; background: #fff; }
.tree { min-height: 100%; }
.tree ul { padding-left: 24px; }
.tree li { position: relative; white-space: nowrap; }
.tree li::before { content: ""; position: absolute; left: 17px; top: 0; bottom: 0; border-left: 1px dotted #999; }
.tree li:last-child:not(.more)::before { bottom: auto; height: 12px; }
.tree li.more::before { bottom: -8px; }
.tree > li:first-child::before { top: 12px; }
.row { display: flex; align-items: center; height: 23px; padding-left: 13px; }
.row svg { width: 16px; height: 16px; flex: none; margin: 0 3px 0 5px; }
.row span { padding: 1px 5px 2px; border-radius: 3px; }
.row .selected { background: #bfcddb; }
.tw { position: relative; flex: none; width: 11px; height: 11px; border: 1px solid #919191; border-radius: 2px; background: linear-gradient(#3a5aa8, #3a5aa8) center / 7px 1px no-repeat, #f4f4f4; }
.tw.plus { background: linear-gradient(#3a5aa8, #3a5aa8) center / 7px 1px no-repeat, linear-gradient(#3a5aa8, #3a5aa8) center / 1px 7px no-repeat, #f4f4f4; }
.tw::after { content: ""; position: absolute; left: 10px; width: 5px; border-top: 1px dotted #999; }
.vbar { padding: 22px 0 0 8px; }
.vbar i { width: 3px; height: 262px; background: #868686; border-radius: 2px; }
.hbar { grid-column: 1 / 3; padding: 8px 0 0 21px; }
.hbar i { width: 351px; height: 3px; background: #868686; border-radius: 2px; }

/* main area */
.main { flex: 1; min-width: 0; margin-left: 3px; background: #b3b3b3; }
.mainhead { display: flex; align-items: center; height: 45px; padding-right: 135px; background: #666; }
.minitools { display: flex; width: 135px; background: #aad233; }
h1 { flex: 1; text-align: center; font-size: 14px; line-height: 20px; font-weight: 700; color: #fff; }
.panels { display: flex; gap: 7px; padding: 4px 4px 0 0; }
.form { width: 592px; flex: none; padding: 6px 0 4px; border: 4px solid #f00; background: #fff; color: #1a1a1a; }
.frow { display: flex; align-items: center; height: 28px; margin-bottom: 6px; }
.frow.tall { margin-bottom: 8px; }
.frow.dense { margin-bottom: 2px; }
.lab { width: 139px; padding-right: 1px; margin-right: 5px; text-align: right; }
.lab.short { width: 89px; }
.lab.inset { padding-right: 10px; }
.lab2 { flex: 1; text-align: right; margin-right: 4px; }
.nr { width: 39px; height: 28px; margin-left: 11px; padding-left: 2px; background: #c8c8c8; border: 1px solid #e5e5e5; border-bottom-color: #777; }
.field { display: flex; align-items: center; height: 28px; padding: 0 2px; border: 1px solid #e5e5e5; border-bottom-color: #777; background: #fff; }
.field input { flex: 1; width: 100%; }
.field.gray { background: #f0f0f0; }
.wide { width: 394px; }
.mid { width: 262px; }
.mid.gray { padding-left: 6px; }
.num { width: 96px; flex: none; padding-right: 6px; }
.num input { text-align: right; }
.num.room { padding-right: 27px; }
.num.auto { padding-right: 1px; color: #808080; }
.num.spin { padding-right: 3px; }
.pen { margin-right: 4px; }
.pen svg { width: 16px; height: 16px; }
.btn { width: 123px; height: 29px; margin-left: 9px; border: 1px solid #ccc; border-radius: 4px; background: #fdfdfd; }
.unit { width: 46px; padding-left: 4px; flex: none; white-space: nowrap; }
.a { width: 21px; height: 24px; margin-left: 9px; border: 2px solid #b4dcfa; background: #aad233; color: #fff; font-size: 16px; }
.updown { display: grid; gap: 1px; margin-left: 3px; }
.updown button { width: 17px; height: 12px; border: 1px solid #ccc; border-radius: 4px; }
.updown svg { width: 8px; height: 5px; }
.used { display: flex; flex-direction: column; flex: 1; background: #fff; }
h2 { padding: 14px 13px; background: #f1f1f1; font-size: 14px; line-height: 20px; font-weight: 700; color: #000; }
.usedbar { margin-top: auto; height: 20px; padding: 8px 46px 0 21px; background: #f0f0f0; }
.usedbar i { height: 3px; background: #868686; }

/* result cards */
.right { display: flex; flex-direction: column; width: 276px; flex: none; padding: 0 0 25px 4px; background: #f0f0f0; }
.pick { display: flex; height: 26px; gap: 2px; }
.pick select { width: 246px; padding: 2px 0 0 4px; appearance: none; border: 1px solid #ddd; background: url("data:image/svg+xml,%3Csvg xmlns='http://www.w3.org/2000/svg' width='10' height='6'%3E%3Cpath d='M1 1l4 4 4-4' fill='none' stroke='%23666'/%3E%3C/svg%3E") right 5px center no-repeat #fff; color: #1a1a1a; }
.pick button { width: 20px; height: 20px; margin-top: 4px; border: 1px solid #ccc; border-radius: 3px; background: #fff; }
.pick button svg { width: 16px; height: 16px; }
.scroll { display: flex; flex: 1; min-height: 0; }
.cards { display: flex; flex-direction: column; gap: 6px; width: 256px; padding: 3px; overflow: hidden; background: #7d7d7d; font-family: "Liberation Sans", Arial, sans-serif; }
.card { position: relative; flex: none; padding: 9px 0 20px 10px; background: #fff; color: #222; }
.card h3 { font-size: 22px; line-height: 26px; font-weight: 400; }
.card p { padding-top: 1px; font-size: 16px; line-height: 18px; }
.card > p:last-child { margin-bottom: -13px; }
.dot { position: absolute; right: 18px; top: 14px; width: 22px; height: 22px; border-radius: 50%; background: #80b217; border: 1px solid #6fa010; }
.dot.empty { background: #fff; border-color: #000; }
.meter { display: flex; width: 212px; margin: 9px 0 0 7px; box-shadow: 1px 1px 2px 1px #aaa; font-size: 11px; line-height: 20px; color: #000; background: #fff; }
h3 + .meter, p + .meter.class { margin-top: 6px; }
p + .meter { margin-top: 7px; }
.meter b { display: flex; align-items: center; justify-content: center; width: 18px; margin-right: 4px; background: #d5d5d5; font-weight: 400; }
.meter b span { writing-mode: vertical-rl; transform: rotate(180deg); line-height: 18px; white-space: nowrap; }
.meter small { font-size: 9px; }
.big { display: flex; flex-direction: column; justify-content: flex-end; align-items: center; flex: 1; height: 165px; padding-bottom: 4px; background: #aad233; color: #fff; text-shadow: 1px 1px 2px #5a7a10; }
.grade { padding-left: 4px; font-size: 156px; line-height: 116px; }
.val { padding-left: 38px; font-size: 17px; line-height: 20px; }
.bars { flex: 1; }
.bar { position: relative; height: 20px; padding-left: 5px; white-space: nowrap; }
.bar:nth-child(2) { height: 21px; }
.bar i { position: absolute; left: 0; top: 0; bottom: 0; }
.bar span { position: relative; }
.bar .g { background: #d5d5d5; }
.bar .bl { background: #3f83b7; }
.bar .lb { background: linear-gradient(90deg, #3f83b7, #5f9dcb); }
.bar .gr { background: linear-gradient(90deg, #5d9700, #9aca2c); }
.bar .gy { background: linear-gradient(90deg, #5d9700, #c8d733); }
.bar .rain { background: linear-gradient(90deg, #b92025, #e98b2c 25%, #fdd631 50%, #aad233 75%, #5d9700); }
.eh { display: flex; flex: 1; gap: 3px; padding-right: 3px; color: #fff; font-weight: 700; line-height: 22px; text-align: right; }
.eh span { width: 16px; background: #80b217; }
.eh .red { background: #b92025; }
.eh .rest { flex: 1; }
.cbar { display: flex; flex-direction: column; align-items: center; flex: 1; padding: 5px 0 5px 4px; gap: 8px; background: #fcfcfc; }
.cbar svg { width: 12px; height: 10px; fill: #8a8a8a; }
.cbar i { width: 11px; flex: 1; margin-bottom: 61px; border-radius: 6px; background: #8a8a8a; }
```
